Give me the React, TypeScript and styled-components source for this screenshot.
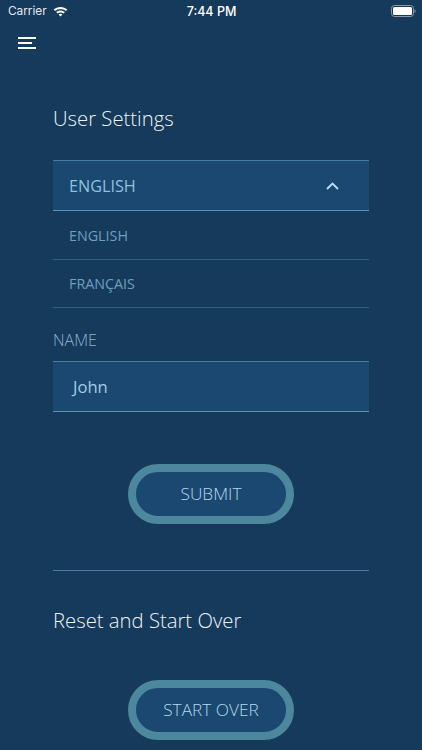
import React from "react";
import styled, { createGlobalStyle } from "styled-components";

const Global = createGlobalStyle`
  html, body { margin: 0; padding: 0; height: 100%; background: #153a5b; overflow: hidden; }
  * { box-sizing: border-box; }
  body { font-family: "Open Sans", "Liberation Sans", sans-serif; }
`;

const Screen = styled.div`
  width: 422px;
  height: 750px;
  background: #153a5b;
  overflow: hidden;
`;

const StatusBar = styled.div`
  height: 22px;
  display: grid;
  grid-template-columns: 1fr auto 1fr;
  align-items: center;
  padding: 0 6px 0 8px;
  color: #fff;
  font-family: "Inter", "Liberation Sans", sans-serif;
  font-size: 11.8px;
`;

const Carrier = styled.div`
  display: flex;
  align-items: center;
  gap: 6px;
  color: #e4e9ee;
`;

const Clock = styled.div`
  font-weight: 500;
  font-size: 12.5px;
  margin-left: -1px;
`;

const BatteryWrap = styled.div`
  justify-self: end;
  display: flex;
`;

const MenuButton = styled.div`
  display: flex;
  flex-direction: column;
  gap: 3px;
  width: 18px;
  margin: 15px 0 0 18px;
`;

const MenuBar = styled.span<{ $w: number }>`
  display: block;
  height: 2px;
  width: ${(p) => p.$w}px;
  background: #fff;
`;

const Content = styled.main`
  padding: 0 53px;
`;

const Title = styled.h2<{ $top: number }>`
  margin: ${(p) => p.$top}px 0 0;
  font-size: 20.3px;
  line-height: 28px;
  font-weight: 300;
  color: #eef3f7;
`;

const SelectHead = styled.div`
  margin-top: 28px;
  height: 51px;
  padding: 0 30px 0 16px;
  display: flex;
  align-items: center;
  justify-content: space-between;
  background: #1a4871;
  border-top: 1px solid #477fa3;
  border-bottom: 1px solid #5b93b5;
  color: #8fc1df;
  font-size: 16.2px;
`;

const Option = styled.div`
  height: 48.5px;
  padding-left: 16px;
  display: flex;
  align-items: center;
  border-bottom: 1px solid #2f5f83;
  color: #6f9fbe;
  font-size: 14.3px;
  padding-top: 1px;
`;

const FieldLabel = styled.div`
  margin-top: 21px;
  font-size: 16px;
  line-height: 22px;
  font-weight: 300;
  color: #8fb5cf;
`;

const NameField = styled.div`
  margin-top: 10px;
  height: 51px;
  padding-left: 20px;
  display: flex;
  align-items: center;
  background: #1a4871;
  border-top: 1px solid #477fa3;
  border-bottom: 1px solid #5b93b5;
  color: #a3cde6;
  font-size: 16.6px;
`;

const PillRow = styled.div<{ $top: number }>`
  margin-top: ${(p) => p.$top}px;
  display: flex;
  justify-content: center;
`;

const Pill = styled.div`
  width: 166px;
  height: 59.5px;
  border: 8px solid #4c879e;
  border-radius: 30px;
  background: #1a4871;
  display: flex;
  align-items: center;
  justify-content: center;
  color: #b4d8ec;
  font-size: 17.3px;
  font-weight: 300;
`;

const Divider = styled.hr`
  margin: 46.5px 0 0;
  border: 0;
  height: 1px;
  background: #467ea1;
`;

const Wifi = () => (
  <svg width="15" height="11" viewBox="0 0 15 11" fill="none">
    <path d="M0.6 3.6C4.4 0 10.6 0 14.4 3.6L13 5.1C10 2.3 5 2.3 2 5.1Z" fill="#fff" />
    <path d="M3.1 6.1C5.5 3.9 9.5 3.9 11.9 6.1L10.5 7.5C8.8 6 6.2 6 4.5 7.5Z" fill="#fff" />
    <path d="M5.6 8.5C6.7 7.6 8.3 7.6 9.4 8.5L7.5 10.6Z" fill="#fff" />
  </svg>
);

const Battery = () => (
  <svg width="25" height="12" viewBox="0 0 25 12" fill="none">
    <rect x="0.5" y="0.5" width="22" height="11" rx="3" stroke="#8b9bab" />
    <rect x="2" y="2" width="19" height="8" rx="1.5" fill="#fff" />
    <path d="M23.5 4.2C24.3 4.5 24.6 5.2 24.6 6C24.6 6.8 24.3 7.5 23.5 7.8Z" fill="#8b9bab" />
  </svg>
);

const Chevron = () => (
  <svg width="13" height="8" viewBox="0 0 13 8" fill="none">
    <path d="M1 7L6.5 1.6L12 7" stroke="#b5dcf2" strokeWidth="2" />
  </svg>
);

export default function App() {
  return (
    <Screen>
      <Global />
      <StatusBar>
        <Carrier>
          Carrier
          <Wifi />
        </Carrier>
        <Clock>7:44 PM</Clock>
        <BatteryWrap>
          <Battery />
        </BatteryWrap>
      </StatusBar>
      <MenuButton>
        <MenuBar $w={18} />
        <MenuBar $w={14} />
        <MenuBar $w={18} />
      </MenuButton>
      <Content>
        <Title $top={55}>User Settings</Title>
        <SelectHead>
          ENGLISH
          <Chevron />
        </SelectHead>
        <Option>ENGLISH</Option>
        <Option>FRANÇAIS</Option>
        <FieldLabel>NAME</FieldLabel>
        <NameField>John</NameField>
        <PillRow $top={52}>
          <Pill>SUBMIT</Pill>
        </PillRow>
        <Divider />
        <Title $top={35}>Reset and Start Over</Title>
        <PillRow $top={46}>
          <Pill>START OVER</Pill>
        </PillRow>
      </Content>
    </Screen>
  );
}
